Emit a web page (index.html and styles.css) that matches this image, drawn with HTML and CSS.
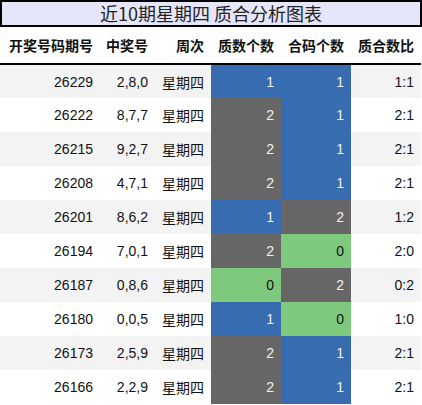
FILE: index.html
```html
<!DOCTYPE html>
<html lang="zh">
<head>
    <meta charset="UTF-8">
    <title>近10期星期四 质合分析图表</title>
    <link rel="stylesheet" href="styles.css">
</head>
<body>
    <div class="chart">
        <div class="title">近10期星期四 质合分析图表</div>
        <table class="grid">
            <thead>
                <tr>
                    <th class="c-issue">开奖号码期号</th>
                    <th class="c-nums">中奖号</th>
                    <th class="c-week">周次</th>
                    <th class="c-val">质数个数</th>
                    <th class="c-val">合码个数</th>
                    <th class="c-ratio">质合数比</th>
                </tr>
            </thead>
            <tbody>
                <tr><td>26229</td><td>2,8,0</td><td>星期四</td><td class="blue">1</td><td class="blue">1</td><td>1:1</td></tr>
                <tr><td>26222</td><td>8,7,7</td><td>星期四</td><td class="gray">2</td><td class="blue">1</td><td>2:1</td></tr>
                <tr><td>26215</td><td>9,2,7</td><td>星期四</td><td class="gray">2</td><td class="blue">1</td><td>2:1</td></tr>
                <tr><td>26208</td><td>4,7,1</td><td>星期四</td><td class="gray">2</td><td class="blue">1</td><td>2:1</td></tr>
                <tr><td>26201</td><td>8,6,2</td><td>星期四</td><td class="blue">1</td><td class="gray">2</td><td>1:2</td></tr>
                <tr><td>26194</td><td>7,0,1</td><td>星期四</td><td class="gray">2</td><td class="green">0</td><td>2:0</td></tr>
                <tr><td>26187</td><td>0,8,6</td><td>星期四</td><td class="green">0</td><td class="gray">2</td><td>0:2</td></tr>
                <tr><td>26180</td><td>0,0,5</td><td>星期四</td><td class="blue">1</td><td class="green">0</td><td>1:0</td></tr>
                <tr><td>26173</td><td>2,5,9</td><td>星期四</td><td class="gray">2</td><td class="blue">1</td><td>2:1</td></tr>
                <tr><td>26166</td><td>2,2,9</td><td>星期四</td><td class="gray">2</td><td class="blue">1</td><td>2:1</td></tr>
            </tbody>
        </table>
    </div>
</body>
</html>
```

FILE: styles.css
```css
* {
    margin: 0;
    padding: 0;
    box-sizing: border-box;
}

body {
    font-family: "Liberation Sans", "Noto Sans CJK SC", sans-serif;
    background: white;
    color: #111;
}

.chart {
    width: 422px;
}

.title {
    height: 27px;
    width: 422px;
    border: 2px solid #000;
    background: #e6e6fa;
    text-align: center;
    font-size: 18px;
    line-height: 23px;
    color: #222;
    font-family: "Noto Sans CJK SC", sans-serif;
}

.grid {
    width: 421px;
    border-collapse: collapse;
    table-layout: fixed;
    font-size: 14px;
}

.grid th {
    height: 37px;
    font-weight: bold;
    font-size: 14px;
    text-align: right;
    padding: 0 7px 0 0;
    border-bottom: 2px solid #000;
    color: #111;
}

.grid td {
    height: 34px;
    text-align: right;
    padding: 0 7px 0 0;
}

.grid tbody tr:nth-child(odd) {
    background: #f3f3f3;
}

.c-issue { width: 100px; }
.c-nums { width: 55px; }
.c-week { width: 56px; }
.c-val { width: 70px; }
.c-ratio { width: 70px; }

.grid td.blue {
    background: #386cb0;
    color: #f2f2f2;
}

.grid td.gray {
    background: #666666;
    color: #f2f2f2;
}

.grid td.green {
    background: #7fc97f;
    color: #111;
}
```
